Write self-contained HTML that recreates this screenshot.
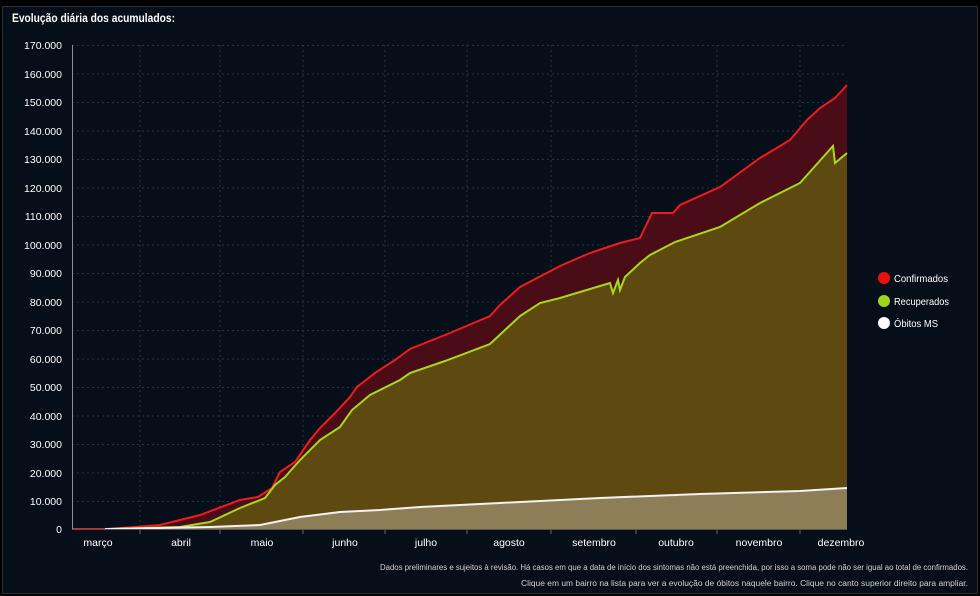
<!DOCTYPE html>
<html><head><meta charset="utf-8"><style>
html,body{margin:0;padding:0;background:#000;}
.wrap{position:relative;width:980px;height:596px;overflow:hidden;background:#000;}
.panel{position:absolute;left:2px;top:6px;width:976px;height:588px;background:#060e19;border:1px solid #2a2f36;box-sizing:border-box;}
svg{position:absolute;left:0;top:0;}
text{font-family:"Liberation Sans",sans-serif;fill:#fff;}
</style></head><body><div class="wrap"><div class="panel"></div>
<svg width="980" height="596" viewBox="0 0 980 596">
<text x="12" y="22" font-size="12" font-weight="bold" textLength="163" lengthAdjust="spacingAndGlyphs">Evolução diária dos acumulados:</text>
<g stroke="#2a3540" stroke-width="1" stroke-dasharray="2,3">
<line x1="72" y1="45.5" x2="847" y2="45.5"/><line x1="72" y1="74" x2="847" y2="74"/><line x1="72" y1="102.5" x2="847" y2="102.5"/><line x1="72" y1="131" x2="847" y2="131"/><line x1="72" y1="159.5" x2="847" y2="159.5"/><line x1="72" y1="188" x2="847" y2="188"/><line x1="72" y1="216.5" x2="847" y2="216.5"/><line x1="72" y1="245" x2="847" y2="245"/><line x1="72" y1="273.5" x2="847" y2="273.5"/><line x1="72" y1="302" x2="847" y2="302"/><line x1="72" y1="330.5" x2="847" y2="330.5"/><line x1="72" y1="359" x2="847" y2="359"/><line x1="72" y1="387.5" x2="847" y2="387.5"/><line x1="72" y1="416" x2="847" y2="416"/><line x1="72" y1="444.5" x2="847" y2="444.5"/><line x1="72" y1="473" x2="847" y2="473"/><line x1="72" y1="501.5" x2="847" y2="501.5"/>
<line x1="140" y1="45" x2="140" y2="529"/><line x1="220" y1="45" x2="220" y2="529"/><line x1="303" y1="45" x2="303" y2="529"/><line x1="385" y1="45" x2="385" y2="529"/><line x1="467" y1="45" x2="467" y2="529"/><line x1="551" y1="45" x2="551" y2="529"/><line x1="636" y1="45" x2="636" y2="529"/><line x1="717" y1="45" x2="717" y2="529"/><line x1="800" y1="45" x2="800" y2="529"/>
</g>
<g font-size="10.5" text-anchor="end">
<text x="62" y="49">170.000</text><text x="62" y="78">160.000</text><text x="62" y="106">150.000</text><text x="62" y="135">140.000</text><text x="62" y="163">130.000</text><text x="62" y="192">120.000</text><text x="62" y="220">110.000</text><text x="62" y="249">100.000</text><text x="62" y="277">90.000</text><text x="62" y="306">80.000</text><text x="62" y="334">70.000</text><text x="62" y="363">60.000</text><text x="62" y="391">50.000</text><text x="62" y="420">40.000</text><text x="62" y="448">30.000</text><text x="62" y="477">20.000</text><text x="62" y="505">10.000</text><text x="62" y="533">0</text>
</g>
<path d="M72,529 L110,529 L160,525 L200,515 L240,500 L258,497 L272,488 L280,472 L295,462 L310,440 L320,428 L335,413 L350,397 L357,387 L375,373 L395,360 L410,349 L450,333 L490,316 L500,305 L520,287 L560,266 L590,253 L620,243 L640,238 L652,213 L673,213 L680,205 L720,187 L760,158 L790,140 L807,120 L820,108 L835,98 L847,85 L847,529 Z" fill="#4a0d17"/>
<path d="M110,529 L180,527 L210,522 L240,508 L265,498 L275,485 L285,477 L300,460 L320,440 L340,427 L352,410 L370,395 L400,380 L410,373 L445,361 L490,344 L505,330 L520,316 L540,303 L560,298 L610,283 L613,293 L618,280 L620,290 L625,277 L640,263 L650,255 L675,242 L720,227 L760,203 L800,183 L825,155 L833,146 L835,163 L847,153 L847,529 Z" fill="#5e4a10"/>
<path d="M105,529 L210,527 L260,525 L300,517 L340,512 L380,510 L420,507 L460,505 L500,503 L600,498 L700,494 L800,491 L847,488 L847,529 Z" fill="#8d7e57"/>
<path d="M72,529 L110,529 L160,525 L200,515 L240,500 L258,497 L272,488 L280,472 L295,462 L310,440 L320,428 L335,413 L350,397 L357,387 L375,373 L395,360 L410,349 L450,333 L490,316 L500,305 L520,287 L560,266 L590,253 L620,243 L640,238 L652,213 L673,213 L680,205 L720,187 L760,158 L790,140 L807,120 L820,108 L835,98 L847,85" fill="none" stroke="#ee1c1c" stroke-width="2"/>
<path d="M110,529 L180,527 L210,522 L240,508 L265,498 L275,485 L285,477 L300,460 L320,440 L340,427 L352,410 L370,395 L400,380 L410,373 L445,361 L490,344 L505,330 L520,316 L540,303 L560,298 L610,283 L613,293 L618,280 L620,290 L625,277 L640,263 L650,255 L675,242 L720,227 L760,203 L800,183 L825,155 L833,146 L835,163 L847,153" fill="none" stroke="#a6d81c" stroke-width="2"/>
<path d="M105,529 L210,527 L260,525 L300,517 L340,512 L380,510 L420,507 L460,505 L500,503 L600,498 L700,494 L800,491 L847,488" fill="none" stroke="#f2f2f2" stroke-width="2"/>
<line x1="72.5" y1="45" x2="72.5" y2="530" stroke="#8a8f96"/>
<line x1="72" y1="529.5" x2="847" y2="529.5" stroke="#555"/>
<g stroke="#666"><line x1="140" y1="530" x2="140" y2="534"/><line x1="220" y1="530" x2="220" y2="534"/><line x1="303" y1="530" x2="303" y2="534"/><line x1="385" y1="530" x2="385" y2="534"/><line x1="467" y1="530" x2="467" y2="534"/><line x1="551" y1="530" x2="551" y2="534"/><line x1="636" y1="530" x2="636" y2="534"/><line x1="717" y1="530" x2="717" y2="534"/><line x1="800" y1="530" x2="800" y2="534"/></g>
<g font-size="10.5" text-anchor="middle">
<text x="98" y="546">março</text><text x="181" y="546">abril</text><text x="262" y="546">maio</text><text x="345" y="546">junho</text><text x="426" y="546">julho</text><text x="509" y="546">agosto</text><text x="594" y="546">setembro</text><text x="676" y="546">outubro</text><text x="759" y="546">novembro</text><text x="841" y="546">dezembro</text>
</g>
<circle cx="884" cy="278" r="6" fill="#e81010"/><circle cx="884" cy="301" r="6" fill="#9fd61a"/><circle cx="884" cy="323" r="6" fill="#fff"/>
<g font-size="10.5"><text x="894" y="282" textLength="54" lengthAdjust="spacingAndGlyphs">Confirmados</text><text x="894" y="305" textLength="55" lengthAdjust="spacingAndGlyphs">Recuperados</text><text x="894" y="327" textLength="44" lengthAdjust="spacingAndGlyphs">Óbitos MS</text></g>
<g font-size="8" text-anchor="end">
<text x="968" y="570" style="fill:#d0d0d0" textLength="588" lengthAdjust="spacingAndGlyphs">Dados preliminares e sujeitos à revisão.  Há casos em que a data de início dos sintomas não está preenchida, por isso a soma pode não ser igual ao total de confirmados.</text>
<text x="968" y="586" style="fill:#d0d0d0" textLength="447" lengthAdjust="spacingAndGlyphs">Clique em um bairro na lista para ver a evolução de óbitos naquele bairro. Clique no canto superior direito para ampliar.</text>
</g>
</svg></div></body></html>
